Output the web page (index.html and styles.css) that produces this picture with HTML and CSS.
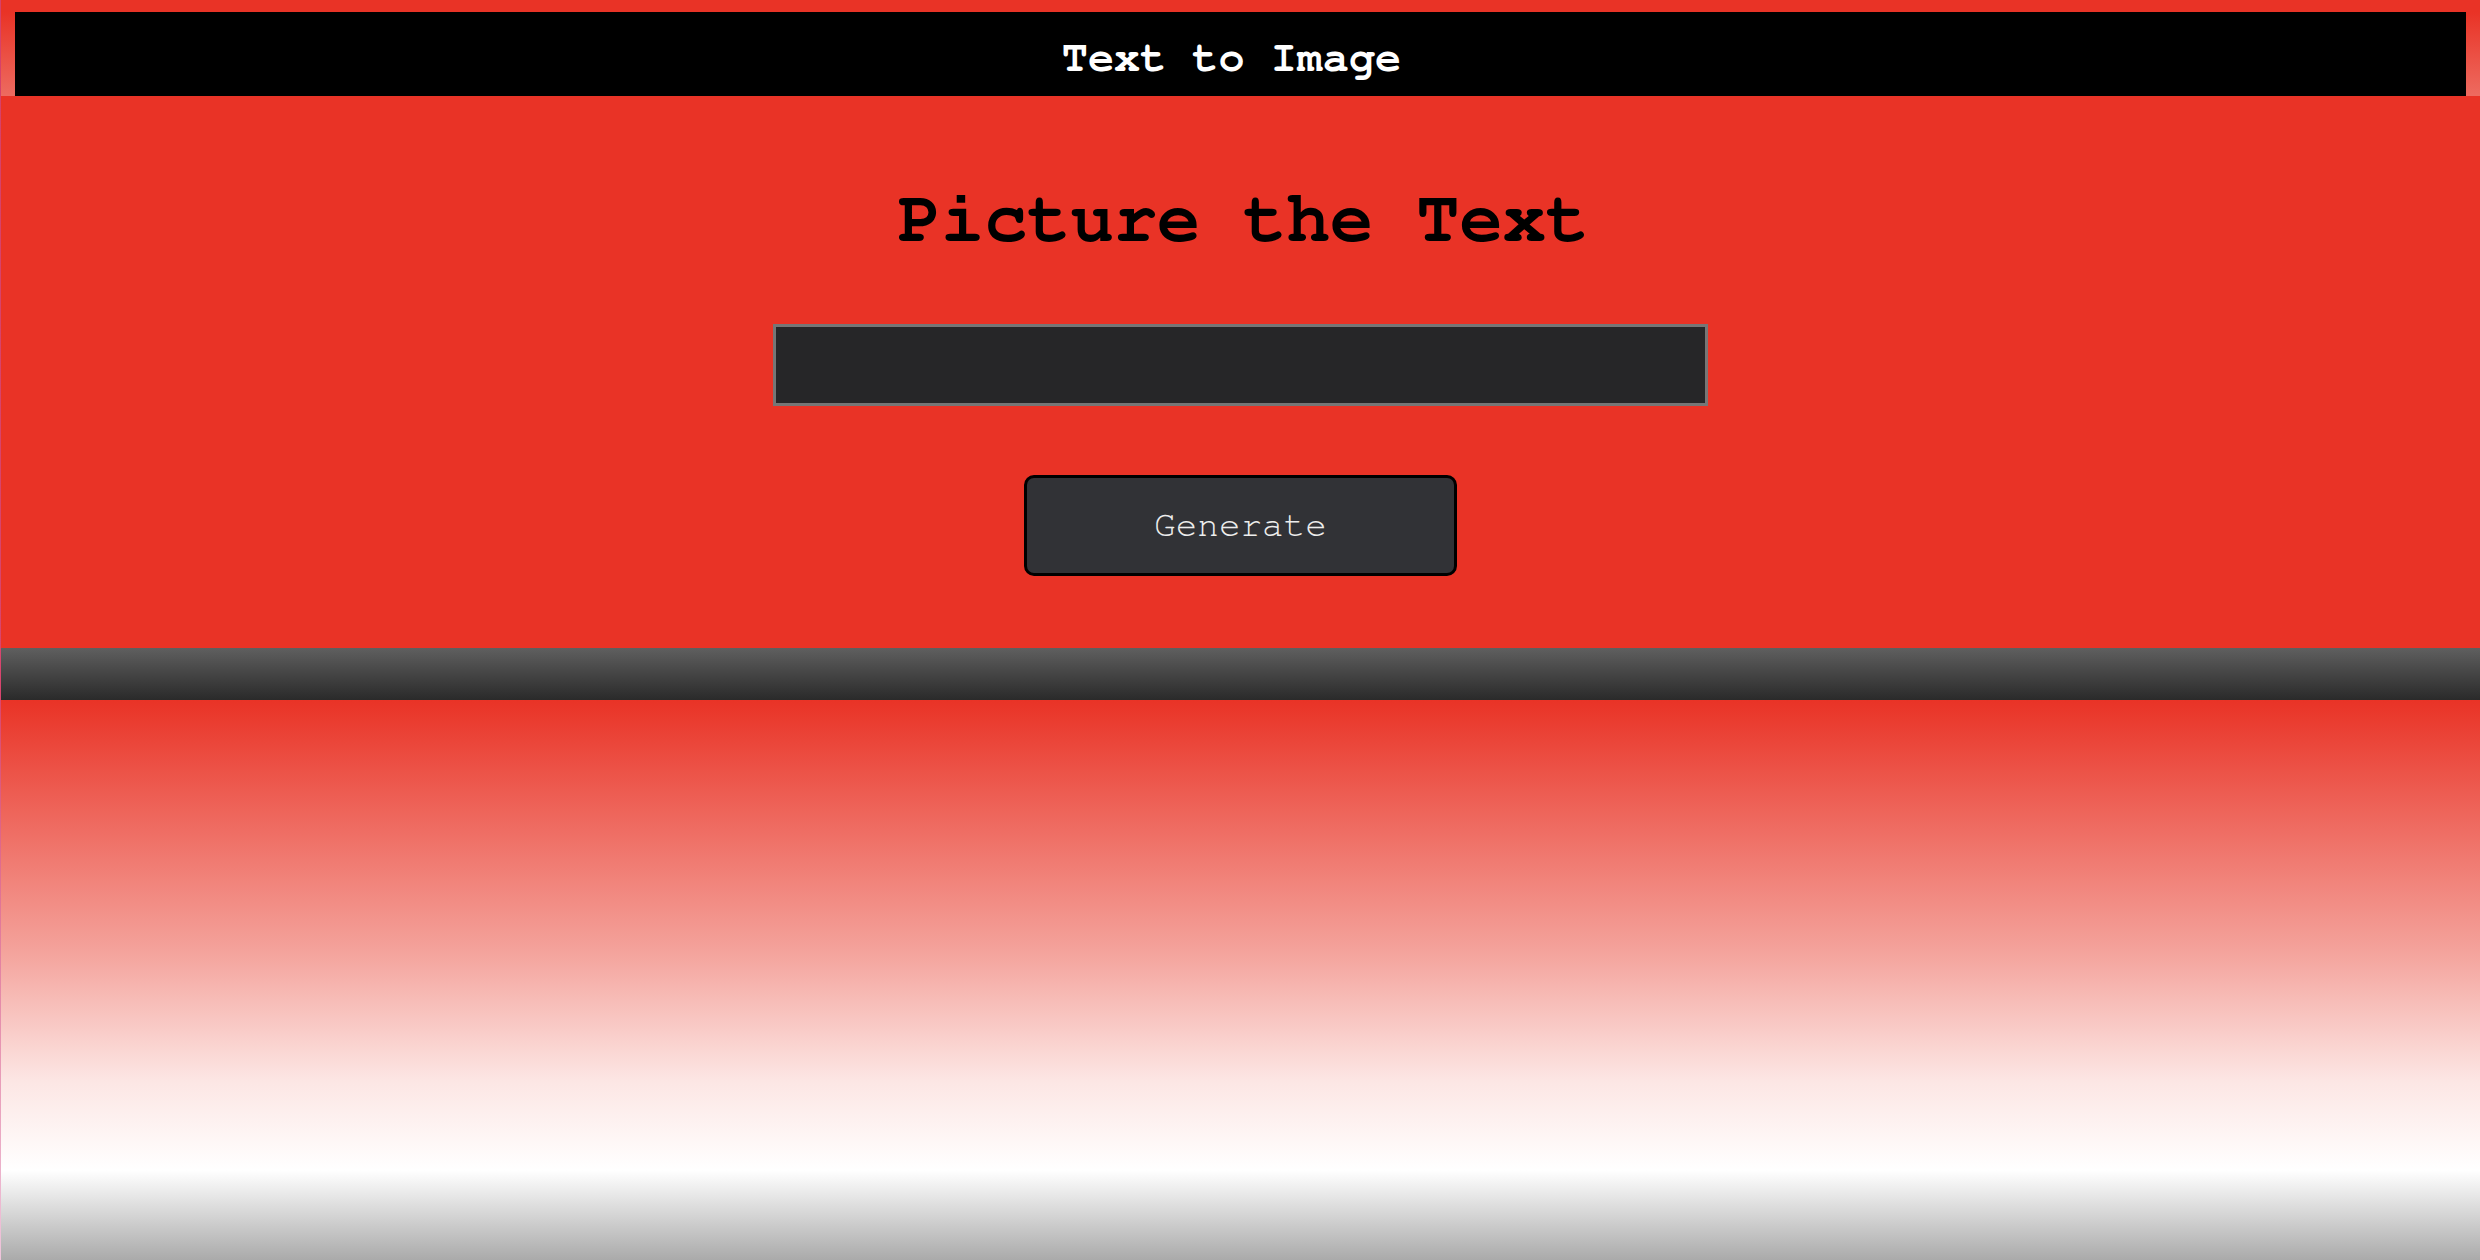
FILE: index.html
```html
<!DOCTYPE html>
<html lang="en">
<head>
<meta charset="utf-8">
<title>Text to Image</title>
<link rel="stylesheet" href="styles.css">
</head>
<body>
  <div class="top">
    <header class="site-header">Text to Image</header>
  </div>
  <main class="hero">
    <h1 class="title">Picture the Text</h1>
    <input class="prompt" type="text" aria-label="Text">
    <button class="generate" type="button">Generate</button>
  </main>
  <div class="band"></div>
  <div class="fade"></div>
</body>
</html>
```
FILE: styles.css
```css
html {
  height: 100%;
  background: linear-gradient(to bottom, #d6406a 0%, #d9456e 55%, #efc6dc 100%);
}

body {
  margin: 0 0 0 1px;
  min-height: 100vh;
  display: flex;
  flex-direction: column;
  font-family: "Nimbus Mono PS", "Nimbus Mono L", "FreeMono", "Courier New", "Liberation Mono", monospace;
}

.top {
  padding: 12px 14px 0 14px;
  background: linear-gradient(to bottom, #e93326 0, #e93326 12px, #ed6b60 100%);
}

.site-header {
  height: 84px;
  box-sizing: border-box;
  padding: 8px 18px 0 0;
  background: #000;
  color: #fff;
  font-size: 43.5px;
  font-weight: bold;
  display: flex;
  align-items: center;
  justify-content: center;
}

.hero {
  background: #e93326;
  display: flex;
  flex-direction: column;
  align-items: center;
  padding: 87px 0 72px;
}

.title {
  margin: 0;
  padding-left: 6px;
  font-size: 72px;
  font-weight: bold;
  line-height: normal;
  color: #000;
}

.prompt {
  margin-top: 69px;
  width: 935px;
  height: 82px;
  box-sizing: border-box;
  border: 3px solid #767676;
  background: #262628;
  color: #ddd;
  font-family: inherit;
  font-size: 28px;
  padding: 0 12px;
  outline: none;
}

.generate {
  margin-top: 69px;
  width: 433px;
  height: 101px;
  box-sizing: border-box;
  padding-bottom: 2px;
  border: 3px solid #000;
  border-radius: 10px;
  background: #313236;
  color: #ededed;
  font-family: inherit;
  font-size: 36px;
  cursor: pointer;
}

.band {
  height: 52px;
  background: linear-gradient(to bottom, #5f5f5f, #2a2a2a);
}

.fade {
  flex: 1;
  background: linear-gradient(to bottom, #e93326 0%, #f4a39c 45%, #fce6e4 68%, #ffffff 84%, #aaaaaa 100%);
}
```
